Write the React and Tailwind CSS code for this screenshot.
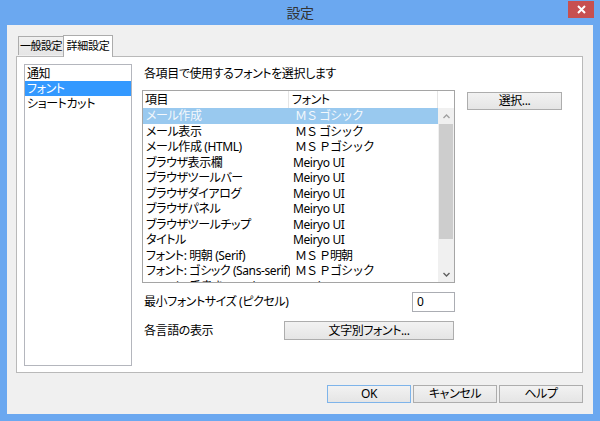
import React from 'react';

const rows = [
  ['メール作成', 'ＭＳ ゴシック'],
  ['メール表示', 'ＭＳ ゴシック'],
  ['メール作成 (HTML)', 'ＭＳ Ｐゴシック'],
  ['ブラウザ表示欄', 'Meiryo UI'],
  ['ブラウザツールバー', 'Meiryo UI'],
  ['ブラウザダイアログ', 'Meiryo UI'],
  ['ブラウザパネル', 'Meiryo UI'],
  ['ブラウザツールチップ', 'Meiryo UI'],
  ['タイトル', 'Meiryo UI'],
  ['フォント: 明朝 (Serif)', 'ＭＳ Ｐ明朝'],
  ['フォント: ゴシック (Sans-serif)', 'ＭＳ Ｐゴシック'],
  ['フォント: 手書き (Cursive)', 'Comic Sans MS'],
];

const btn =
  'flex items-center justify-center border border-[#adadad] bg-gradient-to-b from-[#f2f2f2] to-[#e5e5e5] text-black';

const App = () => {
  return (
    <div className="w-[600px] h-[421px] bg-[#6ba8f0] flex flex-col font-['Noto_Sans','Noto_Sans_CJK_JP',sans-serif] text-[12px] text-black [font-feature-settings:'palt'] tracking-[-0.4px] overflow-hidden">
      {/* title bar */}
      <div className="h-[25px] relative flex items-center justify-center">
        <span className="text-[14px] text-[#333] mt-[-1px]">設定</span>
        <div className="absolute right-[6px] top-[1px] w-[26px] h-[17px] bg-[#c75050] flex items-center justify-center">
          <svg width="9" height="9" viewBox="0 0 9 9">
            <path d="M1 1L8 8M8 1L1 8" stroke="white" strokeWidth="2" />
          </svg>
        </div>
      </div>

      <div className="flex-1 mx-[7px] mb-[7px] bg-[#f0f0f0] flex flex-col">
        {/* tabs */}
        <div className="flex items-end pl-[11px] pt-[10px] relative z-10">
          <div className="w-[45px] h-[19px] border border-[#acacac] border-r-0 border-b-0 bg-gradient-to-b from-[#f0f0f0] to-[#e5e5e5] flex items-center justify-center mb-[1px] whitespace-nowrap text-[11px] tracking-[-0.5px]">
            一般設定
          </div>
          <div className="w-[50px] h-[22px] border border-[#acacac] border-b-0 bg-white flex items-center justify-center mb-[-1px] whitespace-nowrap text-[11px] tracking-[-0.3px]">
            詳細設定
          </div>
        </div>

        {/* panel */}
        <div className="ml-[9px] mr-[10px] h-[317px] border border-[#b9b9b9] bg-white flex p-[7px]">
          <div className="w-[108px] h-[302px] border border-[#b4b6bd] pt-[1px]">
            <div className="h-[15px] leading-[15px] pl-[2px]">通知</div>
            <div className="h-[15px] leading-[15px] pl-[2px] bg-[#3399ff] text-white">フォント</div>
            <div className="h-[15px] leading-[15px] pl-[2px]">ショートカット</div>
          </div>

          <div className="ml-[10px] flex flex-col">
            <div className="h-[18px] leading-[18px] pl-[2px] mt-[1px]">各項目で使用するフォントを選択します</div>

            <div className="flex mt-[7px]">
              {/* font list */}
              <div className="w-[313px] h-[193px] border border-[#a5a5a5] flex flex-col overflow-hidden">
                <div className="h-[17px] flex shrink-0">
                  <div className="w-[146px] border-r border-[#e5e5e5] pl-[2px] leading-[17px]">項目</div>
                  <div className="w-[149px] border-r border-[#e5e5e5] pl-[3px] leading-[17px]">フォント</div>
                  <div className="flex-1" />
                </div>
                <div className="flex flex-1 overflow-hidden">
                  <div className="flex-1 overflow-hidden">
                    {rows.map(([item, font], i) => (
                      <div
                        key={i}
                        className={
                          'h-[15.5px] leading-[15.5px] flex ' +
                          (i === 0 ? 'bg-[#99c9ef] text-[#f4f8fc]' : '')
                        }
                      >
                        <span className="w-[147px] pl-[3px] whitespace-nowrap overflow-hidden">{item}</span>
                        <span className={'whitespace-nowrap ' + (font.startsWith('ＭＳ') ? 'pl-[5px] [font-feature-settings:normal] tracking-[-1px]' : 'pl-[3px]')}>
                          {font}
                        </span>
                      </div>
                    ))}
                  </div>
                  {/* scrollbar */}
                  <div className="w-[16px] bg-[#f0f0f0] flex flex-col items-stretch">
                    <div className="h-[16px] flex items-center justify-center">
                      <svg width="7" height="5" viewBox="0 0 7 5">
                        <path d="M0.5 4L3.5 1L6.5 4" stroke="#a0a0a0" strokeWidth="1.4" fill="none" />
                      </svg>
                    </div>
                    <div className="h-[115px] mx-[1px] bg-[#cdcdcd]" />
                    <div className="flex-1" />
                    <div className="h-[16px] flex items-center justify-center">
                      <svg width="7" height="5" viewBox="0 0 7 5">
                        <path d="M0.5 1L3.5 4L6.5 1" stroke="#606060" strokeWidth="1.4" fill="none" />
                      </svg>
                    </div>
                  </div>
                </div>
              </div>

              <div className={btn + ' ml-[12px] mt-[2px] w-[95px] h-[18px]'}>選択...</div>
            </div>

            <div className="w-[313px] flex items-center justify-between mt-[9px]">
              <span className="pl-[2px]">最小フォントサイズ (ピクセル)</span>
              <div className="w-[43px] h-[20px] border border-[#abadb3] bg-white pl-[4px] leading-[18px]">0</div>
            </div>

            <div className="w-[312px] flex items-center justify-between mt-[9px]">
              <span className="pl-[2px]">各言語の表示</span>
              <div className={btn + ' w-[170px] h-[19px]'}>文字別フォント...</div>
            </div>
          </div>
        </div>

        {/* dialog buttons */}
        <div className="flex justify-end gap-[2px] mr-[10px] mt-[12px]">
          <div className={btn + ' w-[84px] h-[18px] !border-[#7eb4ea]'}>OK</div>
          <div className={btn + ' w-[84px] h-[18px]'}>キャンセル</div>
          <div className={btn + ' w-[84px] h-[18px]'}>ヘルプ</div>
        </div>
      </div>
    </div>
  );
};

export default App;
